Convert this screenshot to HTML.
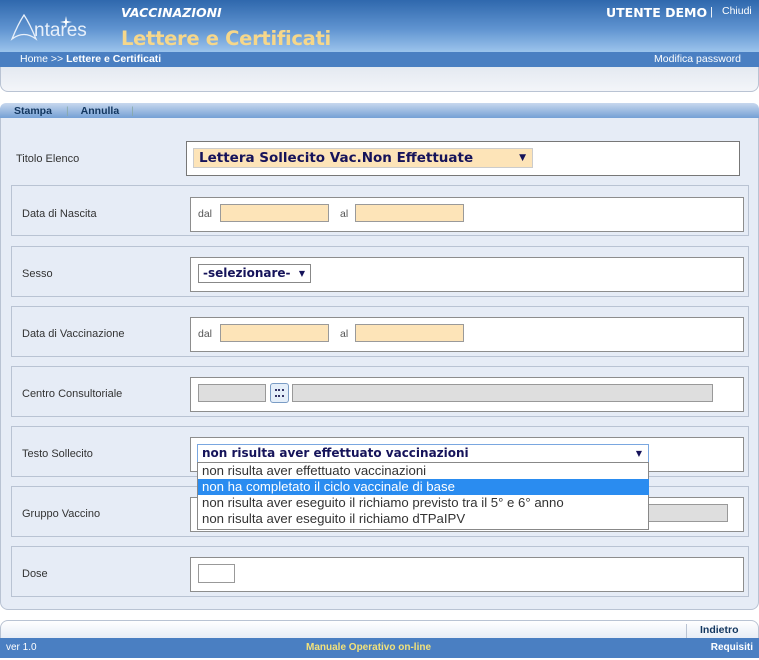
<!DOCTYPE html>
<html><head><meta charset="utf-8"><style>
*{margin:0;padding:0;box-sizing:border-box}
body{width:759px;height:660px;position:relative;background:#fff;font-family:"Liberation Sans","DejaVu Sans",sans-serif;overflow:hidden}
.a{position:absolute}
.hdr{left:0;top:0;width:759px;height:52px;background:linear-gradient(#2f68ad,#5f93d0 55%,#9cc4ec)}
.bc{left:0;top:52px;width:759px;height:15px;background:#4a7fc2;color:#fff;font-size:10.5px;line-height:15px}
.pan1{left:0;top:67px;width:759px;height:25px;background:linear-gradient(#e4e9f1,#f3f5f9);border:1px solid #b9c3d3;border-top:none;border-radius:0 0 8px 8px}
.tb{left:0;top:103px;width:759px;height:16px;background:linear-gradient(#c8d8ee,#6f9cd3);border-radius:6px 6px 0 0;font-size:10.5px;font-weight:bold;color:#12365f;line-height:16px}
.main{left:0;top:118px;width:759px;height:492px;background:#e6ecf6;border:1px solid #b9c3d3;border-top:none;border-radius:0 0 8px 8px}
.grp{left:11px;width:738px;height:51px;border:1px solid #b9c3d3}
.in{left:190px;width:554px;height:35px;background:#fff;border:1px solid #8d8d8d}
.lbl{left:22px;font-size:11px;color:#333}
.inp{height:18px;background:#fde4b8;border:1px solid #9a9a9a}
.g{background:#dedede;border:1px solid #999;height:18px}
.sm{font-size:10.5px;color:#555}
.opt{left:198px;width:451px;height:16px;font-size:13.2px;line-height:16px;padding-left:4px;color:#333}
</style></head><body>
<div class="a hdr"></div>
<svg class="a" style="left:10px;top:12px" width="82" height="30" viewBox="0 0 82 30">
<path d="M2 27 Q8 12 14 3 Q20 12 26 27 Q14 18 2 27Z" fill="none" stroke="#e8f0fa" stroke-width="1.3"/>
<text x="24" y="24" fill="#e8f0fa" font-size="19" font-family="Liberation Sans">ntares</text>
<path d="M56 4 L57 9 L62 10 L57 11 L56 16 L55 11 L50 10 L55 9Z" fill="#fff"/>
</svg>
<div class="a" style="left:121px;top:5px;font:italic bold 12.5px 'DejaVu Sans',sans-serif;color:#fff">VACCINAZIONI</div>
<div class="a" style="left:121px;top:27px;font:bold 19.5px 'DejaVu Sans',sans-serif;color:#f6d78a;letter-spacing:-0.3px">Lettere e Certificati</div>
<div class="a" style="left:606px;top:5px;font:bold 12.5px 'DejaVu Sans',sans-serif;color:#fff">UTENTE DEMO</div>
<div class="a" style="left:710px;top:6px;font-size:11px;color:#fff">|</div>
<div class="a" style="left:722px;top:5px;font-size:10.5px;color:#fff">Chiudi</div>
<div class="a bc"><span style="margin-left:20px">Home &gt;&gt; <b>Lettere e Certificati</b></span><span style="position:absolute;right:18px">Modifica password</span></div>
<div class="a pan1"></div>
<div class="a tb"><span style="margin-left:14px">Stampa</span><span style="margin-left:14px;color:#8aa;font-weight:normal">|</span><span style="margin-left:12px">Annulla</span><span style="margin-left:12px;color:#8aa;font-weight:normal">|</span></div>
<div class="a main"></div>

<div class="a lbl" style="top:153px;left:16px">Titolo Elenco</div>
<div class="a" style="left:186px;top:141px;width:554px;height:35px;background:#fff;border:1px solid #777"></div>
<div class="a" style="left:193px;top:148px;width:340px;height:20px;background:#fde4b8;border:1px solid #ccc;font:bold 13.5px 'DejaVu Sans',sans-serif;color:#15135a;line-height:19px;padding-left:5px">Lettera Sollecito Vac.Non Effettuate<span style="position:absolute;right:6px;font-size:9px">▼</span></div>

<div class="a grp" style="top:185px"></div><div class="a in" style="top:197px"></div>
<div class="a lbl" style="top:208px">Data di Nascita</div>
<div class="a sm" style="left:198px;top:208px">dal</div><div class="a inp" style="left:220px;top:204px;width:109px"></div>
<div class="a sm" style="left:340px;top:208px">al</div><div class="a inp" style="left:355px;top:204px;width:109px"></div>

<div class="a grp" style="top:246px"></div><div class="a in" style="top:257px"></div>
<div class="a lbl" style="top:268px">Sesso</div>
<div class="a" style="left:198px;top:264px;width:113px;height:19px;border:1px solid #888;font:bold 12px 'DejaVu Sans',sans-serif;color:#15135a;line-height:17px;padding-left:4px">-selezionare-<span style="position:absolute;right:5px;font-size:8px">▼</span></div>

<div class="a grp" style="top:306px"></div><div class="a in" style="top:317px"></div>
<div class="a lbl" style="top:328px">Data di Vaccinazione</div>
<div class="a sm" style="left:198px;top:328px">dal</div><div class="a inp" style="left:220px;top:324px;width:109px"></div>
<div class="a sm" style="left:340px;top:328px">al</div><div class="a inp" style="left:355px;top:324px;width:109px"></div>

<div class="a grp" style="top:366px"></div><div class="a in" style="top:377px"></div>
<div class="a lbl" style="top:388px">Centro Consultoriale</div>
<div class="a g" style="left:198px;top:384px;width:68px"></div>
<div class="a" style="left:270px;top:383px;width:19px;height:20px;border:1px solid #7a9cc5;border-radius:3px;background:#e4eef9"><div style="margin:5px 4px;width:9px;height:8px;border-top:2px dotted #336;border-bottom:2px dotted #336"></div></div>
<div class="a g" style="left:292px;top:384px;width:421px"></div>

<div class="a grp" style="top:426px"></div><div class="a in" style="top:437px"></div>
<div class="a lbl" style="top:448px">Testo Sollecito</div>

<div class="a grp" style="top:486px"></div><div class="a in" style="top:497px"></div>
<div class="a lbl" style="top:508px">Gruppo Vaccino</div>
<div class="a g" style="left:640px;top:504px;width:88px"></div>

<div class="a grp" style="top:546px"></div><div class="a in" style="top:557px"></div>
<div class="a lbl" style="top:568px">Dose</div>
<div class="a" style="left:198px;top:564px;width:37px;height:19px;border:1px solid #999;background:#fff"></div>

<div class="a" style="left:197px;top:444px;width:452px;height:19px;background:#fff;border:1px solid #7aa7e0;font:bold 12px 'DejaVu Sans',sans-serif;color:#15135a;line-height:17px;padding-left:4px">non risulta aver effettuato vaccinazioni<span style="position:absolute;right:6px;font-size:8px">▼</span></div>
<div class="a" style="left:197px;top:462px;width:452px;height:68px;background:#fff;border:1px solid #888"></div>
<div class="a opt" style="top:463px">non risulta aver effettuato vaccinazioni</div>
<div class="a opt" style="top:479px;background:#2a8cf0;color:#fff">non ha completato il ciclo vaccinale di base</div>
<div class="a opt" style="top:495px">non risulta aver eseguito il richiamo previsto tra il 5° e 6° anno</div>
<div class="a opt" style="top:511px">non risulta aver eseguito il richiamo dTPaIPV</div>

<div class="a" style="left:0;top:620px;width:759px;height:19px;background:linear-gradient(#fff,#e6ecf6);border:1px solid #b9c3d3;border-bottom:none;border-radius:8px 8px 0 0"></div>
<div class="a" style="left:686px;top:624px;height:14px;border-left:1px solid #b9c3d3"></div>
<div class="a" style="left:700px;top:624px;font-size:10.5px;font-weight:bold;color:#12365f">Indietro</div>
<div class="a" style="left:0;top:638px;width:759px;height:20px;background:#4a7fc2;font-size:10px;line-height:20px;color:#fff">
<span style="position:absolute;left:6px">ver 1.0</span>
<span style="position:absolute;left:306px;color:#f3e27a;font-weight:bold">Manuale Operativo on-line</span>
<span style="position:absolute;right:6px;font-weight:bold">Requisiti</span></div>
</body></html>
